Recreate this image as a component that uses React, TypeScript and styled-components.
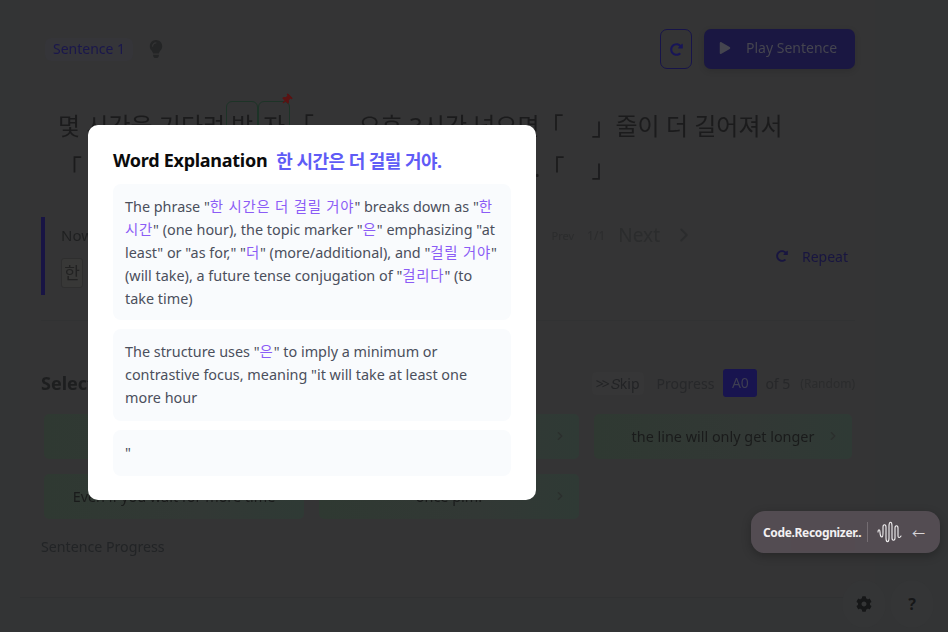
import React from "react";
import styled, { createGlobalStyle } from "styled-components";
import { FaCog, FaLightbulb, FaPlay, FaRedoAlt, FaThumbtack } from "react-icons/fa";
import { ChevronRight } from "lucide-react";

const FONT = `"Noto Sans", "Noto Sans CJK KR", sans-serif`;

const Global = createGlobalStyle`
  html, body { margin: 0; padding: 0; background: #333435; }
  * { box-sizing: border-box; }
  body { font-family: ${FONT}; }
`;

const Stage = styled.div`
  position: relative;
  width: 948px;
  height: 632px;
  overflow: hidden;
  background: #333435;
`;

const Page = styled.div`
  height: 632px;
  padding: 0 73px 34px 20px;
  filter: blur(0.5px);
`;

const Card = styled.main`
  height: 598px;
  padding: 29px 20px 0 21px;
  background: #343435;
  border-bottom: 1px solid #303132;
`;

const TopRow = styled.header`
  display: flex;
  align-items: center;
  height: 40px;
  padding-left: 4px;
  gap: 12px;
`;

const Badge = styled.div`
  padding: 0 8px;
  height: 23px;
  line-height: 21px;
  font-size: 14px;
  color: #1a174c;
  background: #353539;
  border-radius: 6px;
`;

const Bulb = styled.span`
  display: flex;
  margin-left: 2px;
  color: #242526;
  font-size: 18px;
`;

const Spacer = styled.div`
  flex: 1;
`;

const IconButton = styled.button`
  display: flex;
  align-items: center;
  justify-content: center;
  width: 32px;
  height: 40px;
  padding: 0;
  background: transparent;
  border: 1px solid #17144a;
  border-radius: 7px;
  color: #181558;
  font-size: 13px;
`;

const PlayButton = styled.button`
  display: flex;
  align-items: center;
  gap: 15px;
  width: 151px;
  height: 40px;
  padding: 0 15px 3px;
  background: #1a1742;
  border: 0;
  border-radius: 7px;
  color: #45454f;
  font: 14px ${FONT};
  white-space: nowrap;
  box-shadow: 0 2px 6px rgba(0, 0, 0, 0.12);
`;

const Sentence = styled.div`
  margin-top: 36px;
  padding-left: 17px;
  font-size: 24px;
  line-height: 42px;
  height: 84px;
  color: #1b1b1c;
  white-space: nowrap;
`;

const Token = styled.span`
  position: relative;
  display: inline-block;
  width: 32px;
  height: 48px;
  line-height: 48px;
  margin: -4px 0 -8px;
  text-align: center;
  vertical-align: top;
  border: 1px solid #1d3327;
  border-radius: 6px;
`;

const Pin = styled.span`
  position: absolute;
  top: -8px;
  right: -3px;
  display: flex;
  font-size: 11px;
  color: #5a1212;
  transform: rotate(45deg);
`;

const Gap = styled.span<{ $w: number }>`
  display: inline-block;
  width: ${(p) => p.$w}px;
`;

const Practice = styled.section`
  position: relative;
  display: flex;
  margin-top: 28px;
  height: 78px;
  border-left: 4px solid #181444;
  padding: 6px 7px 0 16px;
`;

const PracticeLeft = styled.div`
  flex: 1;
`;

const NowLabel = styled.div`
  font-size: 15px;
  line-height: 24px;
  color: #1f2021;
`;

const NowChar = styled.div`
  width: 22px;
  height: 30px;
  margin-top: 11px;
  background: #383837;
  border: 1px solid #2e2e2e;
  border-radius: 3px;
  color: #222222;
  font-size: 17px;
  line-height: 28px;
  text-align: center;
`;

const PracticeRight = styled.div`
  display: flex;
  flex-direction: column;
  align-items: flex-end;
  width: 330px;
`;

const Pager = styled.div`
  display: flex;
  align-items: center;
  gap: 13px;
  height: 24px;
  padding-right: 153px;
  color: #2b2c2d;
`;

const Prev = styled.span`
  font-size: 11px;
`;

const PageCount = styled.span`
  font-size: 12px;
`;

const Next = styled.span`
  font-size: 19px;
`;

const Repeat = styled.div`
  display: flex;
  align-items: center;
  gap: 14px;
  margin-top: -3px;
  height: 24px;
  font-size: 14px;
  color: #181540;
`;

const Divider = styled.hr`
  margin: 25px 0 0;
  height: 1px;
  border: 0;
  background: #313233;
`;

const SelectRow = styled.div`
  display: flex;
  align-items: center;
  margin-top: 48px;
  height: 28px;
`;

const Heading = styled.h2`
  margin: 0;
  font-size: 18px;
  font-weight: 700;
  color: #1d1e1f;
`;

const Skip = styled.span`
  padding: 2px 4px;
  background: #363637;
  border-radius: 4px;
  font-size: 14px;
  color: #222325;
  margin-right: 13px;
`;

const SkipMark = styled.span`
  letter-spacing: -2px;
  margin-right: 3px;
`;

const ProgressText = styled.span`
  font-size: 14px;
  color: #27282a;
`;

const Level = styled.span`
  margin: 0 8px 0 9px;
  width: 34px;
  height: 28px;
  line-height: 28px;
  text-align: center;
  font-size: 14px;
  border-radius: 3px;
  background: #18144f;
  color: #3e3e52;
`;

const Hint = styled.span`
  margin-left: 10px;
  font-size: 12px;
  color: #2b2c2d;
`;

const Options = styled.div`
  display: grid;
  grid-template-columns: 260px 260px 258px;
  grid-auto-rows: 45px;
  gap: 15px;
  margin-top: 17px;
  padding-left: 3px;
`;

const Option = styled.div`
  position: relative;
  display: flex;
  align-items: center;
  justify-content: center;
  font-size: 14.4px;
  color: #1a1b1b;
  border-radius: 5px;
  background: linear-gradient(90deg, #2f3932, #323835 60%, #2f3a35);
`;

const OptionIcon = styled.span`
  position: absolute;
  right: 12px;
  top: 15px;
  display: flex;
  color: #2b2f2d;
`;

const ProgressRow = styled.div`
  display: flex;
  justify-content: space-between;
  margin-top: 18px;
  line-height: 20px;
  font-size: 14.2px;
  color: #222426;
`;

const Reset = styled.span`
  width: 64px;
  height: 12px;
  margin-top: 2px;
  background: #3a2b2d;
  border-radius: 3px;
`;

const Overlay = styled.div`
  position: absolute;
  inset: 0;
  padding: 125px 412px 0 88px;
`;

const Modal = styled.div`
  height: 375px;
  padding: 23px 25px;
  background: #ffffff;
  border-radius: 10px;
`;

const ModalTitle = styled.div`
  display: flex;
  align-items: center;
  gap: 9px;
  height: 23px;
  margin-bottom: 13px;
  white-space: nowrap;
`;

const TitleText = styled.h3`
  margin: 0;
  font-size: 18px;
  font-weight: 700;
  color: #0b0b0b;
  letter-spacing: -0.27px;
`;

const TitleKorean = styled.span`
  font-size: 18px;
  font-weight: 700;
  color: #5f5cf6;
  letter-spacing: -0.55px;
`;

const Block = styled.p<{ $h: number }>`
  height: ${(p) => p.$h}px;
  margin: 0 0 9px;
  padding: 11px 12px;
  background: #f9fbfd;
  border-radius: 8px;
  font-size: 14.4px;
  line-height: 23px;
  color: #4b4f5c;
`;

const Ko = styled.span`
  font-size: 14.4px;
  letter-spacing: 0.8px;
  color: #8b5cf6;
`;

const Fabs = styled.div`
  position: absolute;
  right: 14px;
  bottom: 4px;
  display: flex;
  gap: 4px;
`;

const Fab = styled.div`
  display: flex;
  align-items: center;
  justify-content: center;
  width: 44px;
  height: 48px;
  border-radius: 50%;
  background: #343536;
  color: #161718;
  font-size: 16px;
  font-weight: 700;
`;

const Pill = styled.div`
  position: absolute;
  left: 751px;
  top: 511px;
  display: flex;
  align-items: center;
  width: 189px;
  height: 42px;
  padding-left: 12px;
  border-radius: 14px;
  background: rgba(88, 80, 86, 0.88);
  box-shadow: 0 3px 10px rgba(0, 0, 0, 0.25);
  color: #f2f0f1;
`;

const PillText = styled.span`
  font-size: 12px;
  font-weight: 700;
  letter-spacing: -0.35px;
  white-space: nowrap;
  width: 104px;
`;

const PillDivider = styled.span`
  width: 1px;
  height: 20px;
  background: #746d72;
`;

const Wave = styled.svg`
  width: 25px;
  height: 22px;
  margin-left: 9px;
`;

const Arrow = styled.span`
  margin-left: 10px;
  font-size: 13px;
  color: #d8d5d7;
`;

export default function App() {
  return (
    <Stage>
      <Global />
      <Page>
        <Card>
          <TopRow>
            <Badge>Sentence 1</Badge>
            <Bulb><FaLightbulb /></Bulb>
            <Spacer />
            <IconButton aria-label="Refresh"><FaRedoAlt /></IconButton>
            <PlayButton><FaPlay size={12} />Play Sentence</PlayButton>
          </TopRow>
          <Sentence>
            몇 시간을 기다려
            <Gap $w={1} />
            <Token>받</Token>
            <Token>자<Pin><FaThumbtack /></Pin></Token>
            「<Gap $w={32} />, 오후 3시간 넘으면「<Gap $w={28} />」줄이 더 길어져서
            <br />
            「<Gap $w={452} />.「<Gap $w={27} />」
          </Sentence>
          <Practice>
            <PracticeLeft>
              <NowLabel>Now</NowLabel>
              <NowChar>한</NowChar>
            </PracticeLeft>
            <PracticeRight>
              <Pager>
                <Prev>Prev</Prev>
                <PageCount>1/1</PageCount>
                <Next>Next</Next>
                <ChevronRight size={22} />
              </Pager>
              <Repeat><FaRedoAlt size={12} />Repeat</Repeat>
            </PracticeRight>
          </Practice>
          <Divider />
          <SelectRow>
            <Heading>Select the meaning</Heading>
            <Spacer />
            <Skip><SkipMark>&gt;&gt;</SkipMark>&#x1D446;kip</Skip>
            <ProgressText>Progress</ProgressText>
            <Level>A0</Level>
            <ProgressText>of 5</ProgressText>
            <Hint>(Random)</Hint>
          </SelectRow>
          <Options>
            <Option>it will take one hour<OptionIcon><ChevronRight size={14} /></OptionIcon></Option>
            <Option>even then, just for you<OptionIcon><ChevronRight size={14} /></OptionIcon></Option>
            <Option>the line will only get longer<OptionIcon><ChevronRight size={14} /></OptionIcon></Option>
            <Option>Even if you wait for more time<OptionIcon><ChevronRight size={14} /></OptionIcon></Option>
            <Option>once p.m.<OptionIcon><ChevronRight size={14} /></OptionIcon></Option>
          </Options>
          <ProgressRow>
            <span>Sentence Progress</span>
            <Reset />
          </ProgressRow>
        </Card>
      </Page>
      <Fabs>
        <Fab aria-label="Settings"><FaCog /></Fab>
        <Fab aria-label="Help">?</Fab>
      </Fabs>
      <Overlay>
        <Modal>
          <ModalTitle>
            <TitleText>Word Explanation</TitleText>
            <TitleKorean>한 시간은 더 걸릴 거야.</TitleKorean>
          </ModalTitle>
          <Block $h={136}>
            The phrase "<Ko>한 시간은 더 걸릴 거야</Ko>" breaks down as "<Ko>한 시간</Ko>" (one hour), the topic marker "<Ko>은</Ko>" emphasizing "at least" or "as for," "<Ko>더</Ko>" (more/additional), and "<Ko>걸릴 거야</Ko>" (will take), a future tense conjugation of "<Ko>걸리다</Ko>" (to take time)
          </Block>
          <Block $h={92}>
            The structure uses "<Ko>은</Ko>" to imply a minimum or contrastive focus, meaning "it will take at least one more hour
          </Block>
          <Block $h={46}>"</Block>
        </Modal>
      </Overlay>
      <Pill>
        <PillText>Code.Recognizer..</PillText>
        <PillDivider />
        <Wave viewBox="0 0 25 22" fill="none" stroke="#f5f3f4" strokeWidth="1.1" strokeLinecap="round">
          <path d="M1 11c0-3 2-3 2 0s1 5 2 5 1-3 1-5V6c0-3 3-3 3 0v11c0 5 3 5 3 0V5c0-5 3-5 3 0v12c0 3 3 3 3 0V7c0-3 3-3 3 0v8c0 2 2 2 3 0" />
        </Wave>
        <Arrow>←</Arrow>
      </Pill>
    </Stage>
  );
}
